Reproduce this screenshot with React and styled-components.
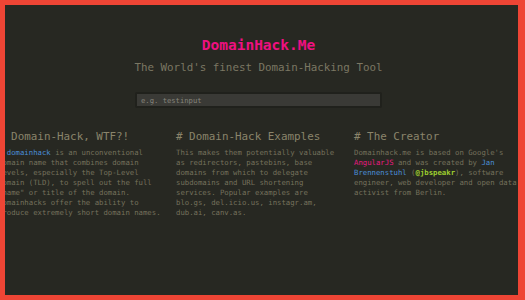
import React from "react";
import styled, { createGlobalStyle } from "styled-components";

const GlobalStyle = createGlobalStyle`
  html, body {
    margin: 0;
    padding: 0;
    background: #272822;
  }
  body {
    font-family: "DejaVu Sans Mono", "Liberation Mono", monospace;
  }
`;

const Frame = styled.div`
  width: 525px;
  height: 300px;
  box-sizing: border-box;
  border-style: solid;
  border-color: #ee4535;
  border-width: 5px 7px 5px 5px;
  background: #272822;
  overflow: hidden;
  padding-top: 31px;
`;

const Wrap = styled.div`
  width: 521px;
  margin-left: -7px;
  display: flex;
  flex-direction: column;
  align-items: center;
`;

const Title = styled.h1`
  margin: 0;
  font-size: 14.5px;
  line-height: 18px;
  font-weight: bold;
  color: #ee1080;
`;

const Tagline = styled.h2`
  margin: 7px 0 0;
  font-size: 10.85px;
  line-height: 14px;
  font-weight: normal;
  color: #7b7763;
`;

const SearchBox = styled.input`
  margin-top: 17px;
  width: 247px;
  height: 16px;
  box-sizing: border-box;
  border: 2px solid #20211c;
  border-radius: 2px;
  background: #3a3a36;
  padding: 0 4px;
  font-family: inherit;
  font-size: 7.2px;
  color: #c8c6b8;
  outline: none;
  &::placeholder {
    color: #86857c;
  }
`;

const Columns = styled.div`
  margin-top: 22px;
  align-self: stretch;
  display: grid;
  grid-template-columns: repeat(3, 165px);
  column-gap: 13px;
`;

const Heading = styled.h3`
  margin: 0;
  font-size: 10.9px;
  line-height: 14px;
  font-weight: normal;
  color: #8a846b;
  white-space: nowrap;
`;

const Text = styled.p`
  margin: 4px 0 0;
  font-size: 7.3px;
  line-height: 10px;
  color: #75715c;
`;

const Hl = styled.a`
  color: ${(p) => p.$color};
  font-weight: ${(p) => (p.$bold ? "bold" : "normal")};
  text-decoration: none;
`;

export default function App() {
  return (
    <>
      <GlobalStyle />
      <Frame>
        <Wrap>
          <Title>DomainHack.Me</Title>
          <Tagline>The World's finest Domain-Hacking Tool</Tagline>
          <SearchBox type="text" placeholder="e.g. testinput" />
          <Columns>
            <div>
              <Heading># Domain-Hack, WTF?!</Heading>
              <Text>
                A <Hl $color="#4a8ed8">domainhack</Hl> is an unconventional
                domain name that combines domain levels, especially the
                Top-Level Domain (TLD), to spell out the full "name" or title
                of the domain. Domainhacks offer the ability to produce
                extremely short domain names.
              </Text>
            </div>
            <div>
              <Heading># Domain-Hack Examples</Heading>
              <Text>
                This makes them potentially valuable as redirectors,
                pastebins, base domains from which to delegate subdomains and
                URL shortening services. Popular examples are blo.gs,
                del.icio.us, instagr.am, dub.ai, canv.as.
              </Text>
            </div>
            <div>
              <Heading># The Creator</Heading>
              <Text>
                Domainhack.me is based on Google's{" "}
                <Hl $color="#ea1a80">AngularJS</Hl> and was created by{" "}
                <Hl $color="#4a8ed8">Jan Brennenstuhl</Hl> (
                <Hl $color="#9ccc2e" $bold>
                  @jbspeakr
                </Hl>
                ), software engineer, web developer and open data activist
                from Berlin.
              </Text>
            </div>
          </Columns>
        </Wrap>
      </Frame>
    </>
  );
}
